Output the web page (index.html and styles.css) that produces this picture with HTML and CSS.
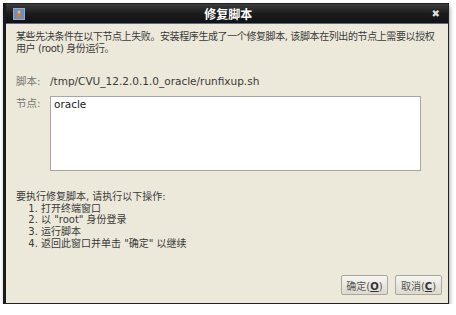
FILE: index.html
```html
<!DOCTYPE html>
<html lang="zh">
  <head>
    <meta charset="UTF-8" />
    <title>修复脚本</title>
    <link rel="stylesheet" href="styles.css">
  </head>
  <body>
    <div class="window">
      <div class="titlebar">
        <span class="app-icon">
          <svg width="12" height="12" viewBox="0 0 12 12">
            <rect x="0.5" y="0.5" width="11" height="11" fill="#6a8fc6" stroke="#9ab" />
            <path d="M3 9 L6 3 L9 9 Z" fill="#e07a2a" />
            <circle cx="6" cy="4" r="1.5" fill="#f4c04a" />
          </svg>
        </span>
        <span class="title">修复脚本</span>
        <span class="close">&#x2716;</span>
      </div>
      <div class="content">
        <p class="intro">某些先决条件在以下节点上失败。安装程序生成了一个修复脚本, 该脚本在列出的节点上需要以授权<br>用户 (root) 身份运行。</p>

        <div class="row script-row">
          <label>脚本:</label>
          <span class="path">/tmp/CVU_12.2.0.1.0_oracle/runfixup.sh</span>
        </div>

        <div class="row nodes-row">
          <label>节点:</label>
          <div class="nodes">oracle</div>
        </div>

        <div class="steps">
          <p>要执行修复脚本, 请执行以下操作:</p>
          <ol>
            <li>打开终端窗口</li>
            <li>以 "root" 身份登录</li>
            <li>运行脚本</li>
            <li>返回此窗口并单击 "确定" 以继续</li>
          </ol>
        </div>

        <div class="buttons">
          <button>确定(<u>O</u>)</button>
          <button>取消(<u>C</u>)</button>
        </div>
      </div>
    </div>
  </body>
</html>
```

FILE: styles.css
```css
body {
  margin: 0;
  background: #fff;
  font-family: "DejaVu Sans", "Noto Sans CJK SC", sans-serif;
  font-size: 10.5px;
  color: #3a3a3a;
}
.window {
  margin: 3px 0 0 3px;
  width: 446px;
  height: 301px;
  border: 1px solid #222;
  border-left: 3px solid #1a1a1a;
  box-sizing: border-box;
  background: #ece9da;
  display: flex;
  flex-direction: column;
  box-shadow: 1px 3px 4px rgba(0, 0, 0, 0.35);
}
.titlebar {
  height: 19px;
  background: linear-gradient(#3c3c3c, #1c1c1c 50%, #111);
  border-bottom: 1px solid #5a6b86;
  display: flex;
  align-items: center;
  padding: 0 8px 0 7px;
}
.app-icon {
  width: 12px;
  height: 12px;
  display: flex;
}
.title {
  flex: 1;
  text-align: center;
  color: #fff;
  font-weight: bold;
  font-size: 12px;
}
.close {
  color: #ddd;
  font-size: 10px;
}
.content {
  flex: 1;
  display: flex;
  flex-direction: column;
  padding: 7px 8px 8px 10px;
}
.intro {
  margin: 0;
  font-size: 10px;
  letter-spacing: -0.4px;
  line-height: 12px;
  white-space: nowrap;
}
.row {
  display: flex;
}
.row label {
  width: 34px;
  color: #777;
}
.script-row {
  margin-top: 19px;
  line-height: 14px;
}
.path {
  font-size: 10.5px;
}
.nodes-row {
  margin-top: 8px;
}
.nodes {
  flex: 1;
  height: 73px;
  margin-right: 19px;
  background: #fff;
  border: 1px solid #a8a6a0;
  padding: 0 3px;
  font-size: 10.5px;
  line-height: 14px;
  color: #222;
}
.nodes-row label {
  line-height: 14px;
}
.steps {
  margin-top: 20px;
  font-size: 10px;
}
.steps p {
  margin: 0;
  line-height: 11.7px;
}
.steps ol {
  margin: 0;
  padding-left: 25px;
}
.steps li {
  line-height: 11.7px;
}
.buttons {
  margin-top: auto;
  display: flex;
  justify-content: flex-end;
  gap: 7px;
  margin-right: -2px;
}
.buttons button {
  font-family: inherit;
  font-size: 10px;
  color: #555;
  width: 47px;
  height: 20px;
  padding: 0;
  background: linear-gradient(#f6f5f0, #dcd9cf);
  border: 1px solid #a9a7a0;
  border-radius: 2px;
}
.buttons u {
  font-weight: bold;
  color: #333;
}
```
